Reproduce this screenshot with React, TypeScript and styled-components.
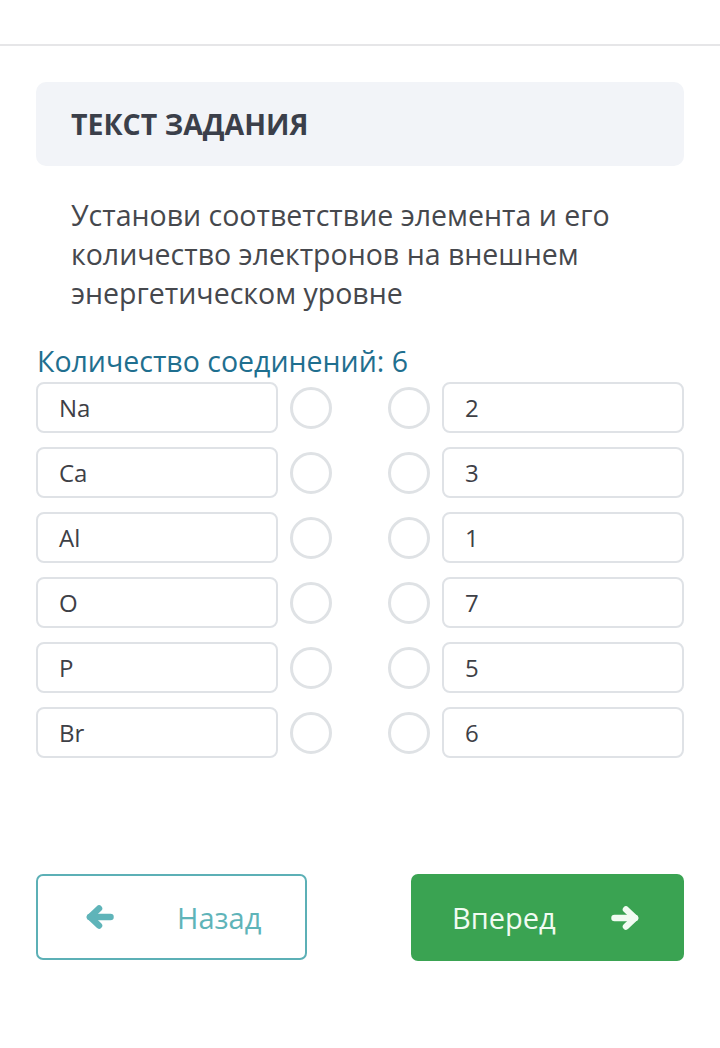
import React from "react";
import styled, { createGlobalStyle } from "styled-components";

const Global = createGlobalStyle`
  html, body { margin: 0; padding: 0; background: #ffffff; }
  body { font-family: "Open Sans", "Noto Sans", sans-serif; }
  * { box-sizing: border-box; }
`;

const Header = styled.div`
  height: 46px;
  border-bottom: 2px solid #e6e6e8;
`;

const Main = styled.main`
  padding: 36px 36px 0 36px;
  display: flex;
  flex-direction: column;
`;

const Card = styled.div`
  height: 84px;
  background: #f2f4f8;
  border-radius: 10px;
  display: flex;
  align-items: center;
  padding-left: 35px;
`;

const CardTitle = styled.h2`
  margin: 0;
  font-size: 28.5px;
  font-weight: 700;
  color: #3b3f4a;
`;

const Question = styled.p`
  margin: 30px 0 0 0;
  padding: 0 35px;
  font-size: 28.5px;
  line-height: 39px;
  color: #46484d;
`;

const CountLabel = styled.div`
  margin-top: 30px;
  padding-left: 1px;
  font-size: 28.5px;
  line-height: 36px;
  color: #1f6f8f;
`;

const Rows = styled.div`
  margin-top: 3px;
  display: flex;
  flex-direction: column;
  gap: 14px;
`;

const Row = styled.div`
  display: grid;
  grid-template-columns: 242px 1fr 242px;
  align-items: center;
`;

const Box = styled.div`
  height: 51px;
  border: 2px solid #dfe2e6;
  border-radius: 8px;
  display: flex;
  align-items: center;
  padding-left: 21px;
  font-size: 24px;
  color: #3e4046;
`;

const Circles = styled.div`
  display: flex;
  justify-content: space-between;
  padding: 0 12px 0 12px;
`;

const Circle = styled.div`
  width: 42px;
  height: 42px;
  border-radius: 50%;
  border: 3px solid #dfe2e5;
`;

const Footer = styled.div`
  margin-top: 116px;
  display: flex;
  justify-content: space-between;
`;

const BackButton = styled.button`
  width: 271px;
  height: 86px;
  border: 2px solid #5cb0b6;
  border-radius: 7px;
  background: #ffffff;
  display: flex;
  align-items: center;
  padding: 0 0 0 48px;
  gap: 63px;
  font-family: inherit;
  font-size: 29px;
  color: #5fb4b9;
`;

const NextButton = styled.button`
  width: 273px;
  height: 87px;
  border: none;
  border-radius: 7px;
  background: #3aa352;
  display: flex;
  align-items: center;
  padding: 0 0 0 41px;
  gap: 55px;
  font-family: inherit;
  font-size: 29px;
  color: #f1fbf2;
`;

const ArrowIcon = styled.svg`
  width: 28px;
  height: 24px;
  flex: none;
`;

const Arrow = ({ dir }: { dir: "left" | "right" }) => (
  <ArrowIcon viewBox="0 0 28 24" aria-hidden="true">
    <g
      transform={dir === "right" ? "matrix(-1 0 0 1 28 0)" : undefined}
      fill="none"
      stroke="currentColor"
      strokeWidth="6.5"
      strokeLinecap="round"
      strokeLinejoin="round"
    >
      <path d="M4 12 H24.5" />
      <path d="M13 3.5 L4 12 L13 20.5" />
    </g>
  </ArrowIcon>
);

const pairs: [string, string][] = [
  ["Na", "2"],
  ["Ca", "3"],
  ["Al", "1"],
  ["O", "7"],
  ["P", "5"],
  ["Br", "6"],
];

export default function App() {
  return (
    <>
      <Global />
      <Header />
      <Main>
        <Card>
          <CardTitle>ТЕКСТ ЗАДАНИЯ</CardTitle>
        </Card>
        <Question>
          Установи соответствие элемента и его количество электронов на внешнем энергетическом уровне
        </Question>
        <CountLabel>Количество соединений: 6</CountLabel>
        <Rows>
          {pairs.map(([l, r]) => (
            <Row key={l}>
              <Box>{l}</Box>
              <Circles>
                <Circle />
                <Circle />
              </Circles>
              <Box>{r}</Box>
            </Row>
          ))}
        </Rows>
        <Footer>
          <BackButton>
            <Arrow dir="left" />
            Назад
          </BackButton>
          <NextButton>
            Вперед
            <Arrow dir="right" />
          </NextButton>
        </Footer>
      </Main>
    </>
  );
}
